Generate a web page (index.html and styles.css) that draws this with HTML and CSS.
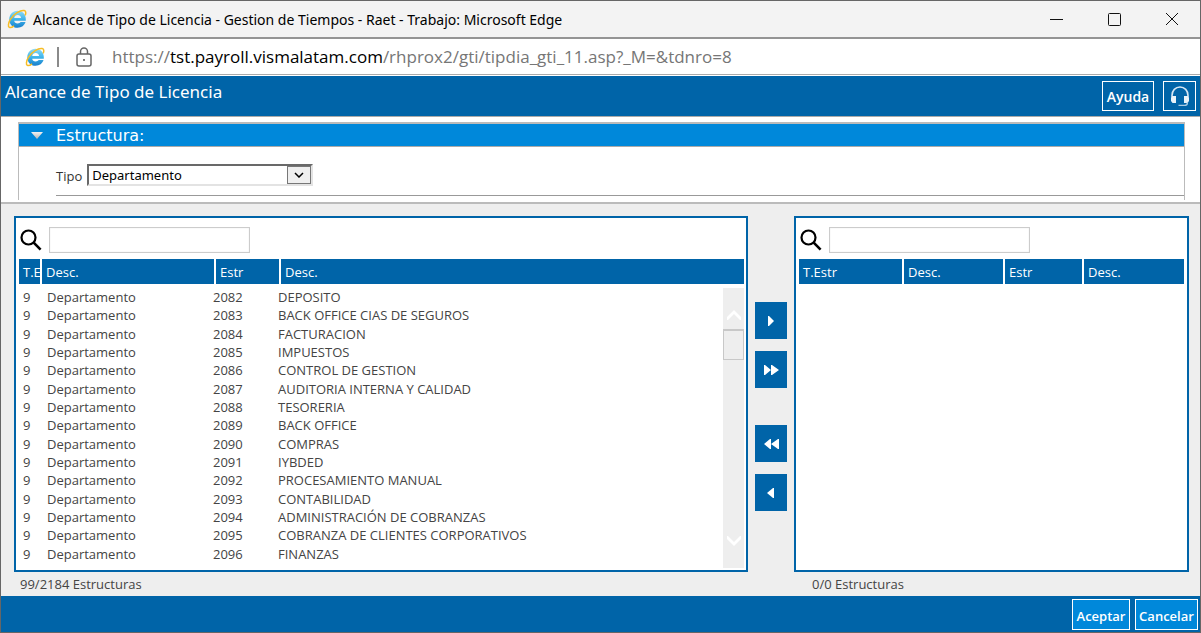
FILE: index.html
```html
<!DOCTYPE html>
<html lang="es">
<head>
<meta charset="utf-8">
<title>Alcance de Tipo de Licencia</title>
<link rel="stylesheet" href="styles.css">
</head>
<body>
<svg width="0" height="0" class="defs" aria-hidden="true">
  <defs>
    <linearGradient id="ie-blue" x1="0" y1="0" x2="0" y2="1"><stop offset="0" stop-color="#8fdcf8"/><stop offset=".5" stop-color="#3eb4ea"/><stop offset="1" stop-color="#1a7fcb"/></linearGradient>
    <linearGradient id="tri" x1="0" y1="0" x2="0" y2="1"><stop offset="0" stop-color="#f2f2f2"/><stop offset="1" stop-color="#b5b5b5"/></linearGradient>
    <symbol id="ie" viewBox="0 0 20 20">
      <path fill="url(#ie-blue)" fill-rule="evenodd" d="M10.500 1.800c4.800 0 8.300 3.500 8.300 8.200v1.800H7.200c.2 1.700 1.600 2.700 3.400 2.700 1.400 0 2.500-.5 3.100-1.400h4.800c-1 3.400-4 5.700-7.900 5.700-4.900 0-8.300-3.600-8.300-8.400s3.400-8.600 8.200-8.600zM7.200 8.900h6.900c-.2-1.700-1.600-2.800-3.400-2.800s-3.200 1.100-3.500 2.800z"/>
      <path d="M18.200 6.400c1-2.400.7-4.500-1-4.900C13.500.7 6.600 5 3.400 10.400 1.200 14 .8 17.700 2.400 18.400c1.200.5 3-.3 4.600-1.600" fill="none" stroke="#f6bd27" stroke-width="1.500"/>
    </symbol>
    <symbol id="search" viewBox="0 0 22 22">
      <circle cx="8.500" cy="8.500" r="7" fill="none" stroke="#000" stroke-width="2.200"/>
      <path d="M13.700 13.700 20.600 20.600" fill="none" stroke="#000" stroke-width="2.600"/>
    </symbol>
  </defs>
</svg>
<div class="window">
  <header class="titlebar">
    <svg class="ie-icon"><use href="#ie"/></svg>
    <span class="titlebar-text">Alcance de Tipo de Licencia - Gestion de Tiempos - Raet - Trabajo: Microsoft Edge</span>
    <div class="window-controls">
      <button type="button" aria-label="Minimizar"><svg viewBox="0 0 14 14"><path d="M1 7.500h13"/></svg></button>
      <button type="button" aria-label="Maximizar"><svg viewBox="0 0 14 14"><rect x="1.500" y="1.500" width="12" height="12" rx="1"/></svg></button>
      <button type="button" aria-label="Cerrar"><svg viewBox="0 0 14 14"><path d="M1 1l12 12M13 1 1 13"/></svg></button>
    </div>
  </header>
  <div class="addressbar">
    <svg class="ie-icon"><use href="#ie"/></svg>
    <span class="divider"></span>
    <svg class="lock" viewBox="0 0 16 20"><rect x="1" y="7" width="14" height="12" rx="2"/><path d="M4.500 7V4.500a3.500 3.500 0 0 1 7 0V7"/><circle cx="8" cy="13" r="1"/></svg>
    <span class="url">https://<b>tst.payroll.vismalatam.com</b>/rhprox2/gti/tipdia_gti_11.asp?_M=&amp;tdnro=8</span>
  </div>

  <div class="page-head">
    <h1>Alcance de Tipo de Licencia</h1>
    <div class="head-actions">
      <button type="button" class="btn-outline">Ayuda</button>
      <button type="button" class="btn-outline btn-support" aria-label="Soporte">
        <svg viewBox="0 0 20 20"><path d="M2 12V9.500C2 4.500 5.500 1 10 1s8 3.500 8 8.500V12" fill="none" stroke="#d5e6f3" stroke-width="1.600"/><path d="M1 11.500h1v-1.500h4v7H2.500L1 15zM19 11.500h-1v-1.500h-4v7h3.500L19 15z" fill="#e8f2f9"/><path d="M17.500 16.500c0 2-1 3-3 3H8.500" fill="none" stroke="#a8cae3" stroke-width="1.400"/></svg>
      </button>
    </div>
  </div>

  <section class="filter">
    <div class="filter-box">
      <h2><svg class="collapse" viewBox="0 0 12 7"><path d="M0 0h12L6 7z" fill="url(#tri)"/></svg>Estructura:</h2>
      <div class="filter-row">
        <label for="tipo">Tipo</label>
        <div class="select-wrap">
          <select id="tipo"><option>Departamento</option></select>
          <span class="select-arrow"><svg viewBox="0 0 10 6"><path d="M1 1l4 4 4-4"/></svg></span>
        </div>
      </div>
    </div>
  </section>

  <main class="transfer">
    <section class="side side-left">
      <div class="panel">
        <div class="search">
          <label for="q1" aria-label="Buscar disponibles"><svg><use href="#search"/></svg></label>
          <input id="q1" type="text">
        </div>
        <div class="columns columns-left"><span>T.Estr</span><span>Desc.</span><span>Estr</span><span>Desc.</span></div>
        <div class="list">
          <table>
            <colgroup><col class="c1"><col class="c2"><col class="c3"><col></colgroup>
            <tbody>
              <tr><td>9</td><td>Departamento</td><td>2082</td><td>DEPOSITO</td></tr>
              <tr><td>9</td><td>Departamento</td><td>2083</td><td>BACK OFFICE CIAS DE SEGUROS</td></tr>
              <tr><td>9</td><td>Departamento</td><td>2084</td><td>FACTURACION</td></tr>
              <tr><td>9</td><td>Departamento</td><td>2085</td><td>IMPUESTOS</td></tr>
              <tr><td>9</td><td>Departamento</td><td>2086</td><td>CONTROL DE GESTION</td></tr>
              <tr><td>9</td><td>Departamento</td><td>2087</td><td>AUDITORIA INTERNA Y CALIDAD</td></tr>
              <tr><td>9</td><td>Departamento</td><td>2088</td><td>TESORERIA</td></tr>
              <tr><td>9</td><td>Departamento</td><td>2089</td><td>BACK OFFICE</td></tr>
              <tr><td>9</td><td>Departamento</td><td>2090</td><td>COMPRAS</td></tr>
              <tr><td>9</td><td>Departamento</td><td>2091</td><td>IYBDED</td></tr>
              <tr><td>9</td><td>Departamento</td><td>2092</td><td>PROCESAMIENTO MANUAL</td></tr>
              <tr><td>9</td><td>Departamento</td><td>2093</td><td>CONTABILIDAD</td></tr>
              <tr><td>9</td><td>Departamento</td><td>2094</td><td>ADMINISTRACIÓN DE COBRANZAS</td></tr>
              <tr><td>9</td><td>Departamento</td><td>2095</td><td>COBRANZA DE CLIENTES CORPORATIVOS</td></tr>
              <tr><td>9</td><td>Departamento</td><td>2096</td><td>FINANZAS</td></tr>
            </tbody>
          </table>
          <div class="scrollbar">
            <svg viewBox="0 0 16 12"><path d="M1 11V8l7-7 7 7v3H14L8 5l-6 6z"/></svg>
            <div class="track"><div class="thumb"></div></div>
            <svg viewBox="0 0 16 12"><path d="M1 1v3l7 7 7-7V1H14L8 7 2 1z"/></svg>
          </div>
        </div>
      </div>
      <p class="count">99/2184 Estructuras</p>
    </section>

    <div class="movers">
      <button type="button" aria-label="Agregar"><svg viewBox="0 0 16 12"><path d="M5 1h1l5 5-5 5H5z"/></svg></button>
      <button type="button" aria-label="Agregar todos"><svg viewBox="0 0 16 12"><path d="M1 1h1l6 5-6 5H1zM8 1h1l7 5-7 5H8z"/></svg></button>
      <button type="button" class="gap" aria-label="Quitar todos"><svg viewBox="0 0 16 12"><path d="M8 1H7L1 6l6 5h1zM16 1h-1L8 6l7 5h1z"/></svg></button>
      <button type="button" aria-label="Quitar"><svg viewBox="0 0 16 12"><path d="M10 1h1v10h-1L4 6z"/></svg></button>
    </div>

    <section class="side side-right">
      <div class="panel">
        <div class="search">
          <label for="q2" aria-label="Buscar seleccionados"><svg><use href="#search"/></svg></label>
          <input id="q2" type="text">
        </div>
        <div class="columns columns-right"><span>T.Estr</span><span>Desc.</span><span>Estr</span><span>Desc.</span></div>
      </div>
      <p class="count">0/0 Estructuras</p>
    </section>
  </main>

  <footer class="actions">
    <button type="button">Aceptar</button>
    <button type="button">Cancelar</button>
  </footer>
</div>
</body>
</html>
```
FILE: styles.css
```css
* { box-sizing: border-box; }
body { margin: 0; font-family: "Open Sans", "Noto Sans", sans-serif; font-size: 13px; color: #444; }
button { font: inherit; padding: 0; border: 0; background: none; }
h1, h2, p { margin: 0; font-weight: 400; }
svg { display: block; }
.defs { position: absolute; }

.window { display: flex; flex-direction: column; min-height: 100vh; border: 1px solid #666; background: #fff; }

.titlebar { display: flex; align-items: center; height: 38px; padding: 0 21px 0 6px; background: #f3f3f3; border-bottom: 2px solid #949494; font-family: "Noto Sans", sans-serif; font-size: 14px; color: #000; }
.ie-icon { width: 20px; height: 20px; flex: none; }
.titlebar-text { margin-left: 6px; }
.window-controls { display: flex; gap: 44px; margin-left: auto; }
.window-controls svg { width: 14px; height: 14px; fill: none; stroke: #111; stroke-width: 1; }

.addressbar { display: flex; align-items: center; height: 36px; padding-left: 24px; border-bottom: 1px solid #aaa; }
.divider { width: 2px; height: 20px; margin: 0 17px 0 12px; background: #8a8a8a; }
.lock { width: 16px; height: 20px; fill: none; stroke: #666; stroke-width: 1.500; }
.lock circle { fill: #555; stroke: none; }
.url { margin-left: 20px; font-size: 17px; color: #767676; }
.url b { font-weight: 400; color: #000; }

.page-head { display: flex; justify-content: space-between; height: 41px; margin-top: 1px; padding: 0 4px; background: #0064a8; border-bottom: 1px solid #aaa; color: #fff; }
.page-head h1 { font-family: "Noto Sans", sans-serif; font-size: 17px; line-height: 32px; }
.head-actions { display: flex; gap: 9px; padding-top: 5px; }
.btn-outline { height: 30px; width: 52px; border: 1px solid #fff; color: #fff; font-size: 14px; font-weight: 600; }
.btn-support { display: grid; place-items: center; width: 33px; }
.btn-support svg { width: 20px; height: 20px; }

.filter { padding: 5px 15px 2px 17px; border-bottom: 2px solid #bbb; }
.filter-box { border: 1px solid #bbb; border-top: 2px solid #bbb; border-bottom: 0; padding-bottom: 4px; }
.filter-box h2 { display: flex; align-items: center; height: 23px; padding-left: 12px; background: #0088da; border-bottom: 1px solid #aaa; color: #fff; font-family: "DejaVu Sans", sans-serif; font-size: 16px; }
.collapse { width: 12px; height: 7px; margin-right: 13px; }
.filter-row { display: flex; align-items: center; gap: 5px; height: 49px; margin-left: 37px; padding-top: 10px; border-bottom: 1px solid #999; color: #333; }
.select-wrap { display: grid; width: 226px; height: 22px; margin-bottom: 2px; border: 2px solid #696969; border-right-color: #e3e3e3; border-bottom-color: #e3e3e3; }
.select-wrap > * { grid-area: 1 / 1; }
.select-wrap select { appearance: none; width: 100%; height: 18px; padding: 0 28px 0 3px; border: 0; background: #fff; color: #000; font: 13px "Noto Sans", sans-serif; }
.select-arrow { display: grid; place-items: center; justify-self: end; width: 24px; height: 18px; border: 1px solid #777; background: #efefef; pointer-events: none; }
.select-arrow svg { width: 10px; height: 6px; fill: none; stroke: #000; stroke-width: 1.500; }

.transfer { flex: 1; display: flex; padding: 12px 11px 0 13px; background: #eee; }
.side { display: flex; flex-direction: column; min-width: 0; }
.side-left { flex: 734 1 0; }
.side-right { flex: 395 1 0; }
.panel { flex: 1; display: flex; flex-direction: column; padding: 3px 2px 2px 3px; border: 2px solid #0064a8; background: #fff; }
.search { display: flex; align-items: center; gap: 7px; height: 38px; padding-left: 1px; }
.search svg { width: 22px; height: 22px; }
.search input { width: 201px; height: 26px; padding: 2px 4px; border: 1px solid #ccc; box-shadow: inset 0 0 1px #ccc; font: inherit; }
.columns { display: grid; column-gap: 2px; color: #fff; line-height: 26px; height: 25px; }
.columns span { overflow: hidden; padding-left: 4px; background: #0064a8; white-space: nowrap; }
.columns-left { grid-template-columns: 21px 172px 63px 1fr; }
.columns-right { grid-template-columns: 103px 99px 77px 1fr; margin-right: 1px; }

.list { flex: 1; display: flex; margin-top: 4px; }
.list table { flex: 1; height: 275px; border-collapse: collapse; table-layout: fixed; width: 100%; }
.list td { padding: 0; line-height: 18px; white-space: nowrap; }
.list td:first-child { padding-left: 4px; }
.c1 { width: 28px; }
.c2 { width: 166px; }
.c3 { width: 65px; }
.scrollbar { display: flex; flex-direction: column; align-items: center; width: 21px; padding: 21px 0; background: #eee; }
.scrollbar svg { width: 16px; height: 12px; fill: #fff; flex: none; }
.track { flex: 1; width: 100%; padding-top: 8px; }
.thumb { height: 31px; border: 1px solid #c8c8c8; border-top-width: 2px; }
.count { padding-left: 6px; line-height: 24px; }
.side-right .count { padding-left: 18px; }

.movers { display: flex; flex-direction: column; gap: 12px; padding: 86px 7px 0; }
.movers button { display: grid; place-items: center; width: 32px; height: 37px; background: #0064a8; }
.movers .gap { margin-top: 25px; }
.movers svg { width: 16px; height: 12px; fill: #fff; }

.actions { display: flex; justify-content: flex-end; gap: 5px; height: 36px; padding: 3px 2px 2px; background: #0064a8; }
.actions button { width: 58px; height: 31px; padding-top: 2px; border: 1px solid #fff; background: #0088da; color: #fff; font-weight: 600; }
.actions button:last-child { width: 63px; }
```
